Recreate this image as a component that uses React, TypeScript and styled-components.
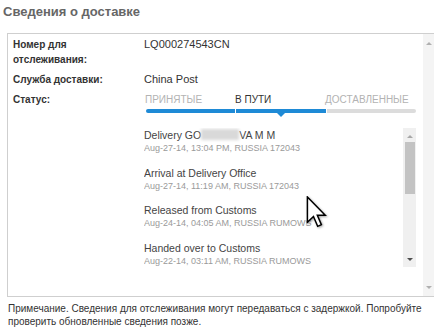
import React from "react";
import styled, { createGlobalStyle } from "styled-components";

const GlobalStyle = createGlobalStyle`
  html, body { margin: 0; padding: 0; background: #fff; }
  body { font-family: "Liberation Sans", Arial, sans-serif; color: #333; overflow: hidden; }
`;

const Page = styled.div`
  position: relative;
  width: 434px;
  height: 333px;
  overflow: hidden;
`;

const Title = styled.h1`
  margin: 0;
  padding: 4px 0 0 3px;
  height: 33px;
  box-sizing: border-box;
  font-size: 13px;
  line-height: 16px;
  font-weight: bold;
  color: #666;
`;

const Box = styled.div`
  margin-left: 7px;
  height: 264px;
  box-sizing: border-box;
  border: 1px solid #cfcfcf;
  border-right: none;
  display: flex;
`;

const Content = styled.div`
  flex: 1;
  padding: 3px 7px 0 5px;
  display: grid;
  grid-template-columns: 131px 1fr;
  grid-auto-rows: min-content;
  row-gap: 5px;
`;

const Label = styled.div`
  font-size: 10px;
  font-weight: bold;
  line-height: 15px;
  color: #333;
  width: 90px;
`;

const Value = styled.div`
  font-size: 11px;
  line-height: 15px;
  color: #333;
`;

const StatusCell = styled.div`
  display: flex;
  flex-direction: column;
`;

const Steps = styled.div`
  display: grid;
  grid-template-columns: repeat(3, 90px);
  padding-left: 1px;
`;

const StepLabel = styled.div<{ $active?: boolean }>`
  font-size: 10px;
  line-height: 15px;
  color: ${(p) => (p.$active ? "#333" : "#b3b3b3")};
`;

const Bar = styled.div`
  display: grid;
  grid-template-columns: repeat(3, 1fr);
  column-gap: 1px;
  width: 270px;
  margin: 2px 0 0 2px;
  height: 4px;
`;

const Segment = styled.div<{ $done?: boolean; $pos: "first" | "mid" | "last"; $current?: boolean }>`
  position: relative;
  height: 4px;
  background: ${(p) => (p.$done ? "#1e8ad6" : "#dcdcdc")};
  border-radius: ${(p) =>
    p.$pos === "first" ? "2px 0 0 2px" : p.$pos === "last" ? "0 2px 2px 0" : "0"};
  &::after {
    content: "";
    display: ${(p) => (p.$current ? "block" : "none")};
    position: absolute;
    left: 50%;
    top: 4px;
    margin-left: -4px;
    border-left: 4px solid transparent;
    border-right: 4px solid transparent;
    border-top: 4px solid #1e8ad6;
  }
`;

const ListArea = styled.div`
  display: flex;
  margin-top: 15px;
  height: 139px;
`;

const Events = styled.div`
  flex: 1;
  overflow: hidden;
`;

const Event = styled.div`
  margin-bottom: 11.5px;
`;

const EventTitle = styled.div`
  font-size: 10.5px;
  line-height: 14px;
  color: #444;
  white-space: nowrap;
`;

const EventDate = styled.div`
  font-size: 9px;
  line-height: 12px;
  color: #9a9a9a;
  white-space: nowrap;
`;

const Blur = styled.span`
  display: inline-block;
  width: 38px;
  height: 11px;
  vertical-align: -1px;
  background: #d9d9d9;
  filter: blur(1.5px);
`;

const Track = styled.div<{ $w: number; $bg: string }>`
  width: ${(p) => p.$w}px;
  background: ${(p) => p.$bg};
  display: flex;
  flex-direction: column;
  align-items: center;
  flex-shrink: 0;
`;

const Arrow = styled.div<{ $dir: "up" | "down"; $color: string; $top: number }>`
  margin-top: ${(p) => p.$top}px;
  width: 0;
  height: 0;
  border-left: 3px solid transparent;
  border-right: 3px solid transparent;
  ${(p) =>
    p.$dir === "up"
      ? `border-bottom: 3px solid ${p.$color};`
      : `border-top: 3px solid ${p.$color};`}
`;

const Thumb = styled.div`
  margin-top: 4px;
  width: 10px;
  height: 52px;
  background: #c3c3c3;
`;

const Spacer = styled.div`
  flex: 1;
`;

const Note = styled.p`
  margin: 0;
  padding: 5px 0 0 8px;
  width: 420px;
  font-size: 10px;
  line-height: 13px;
  color: #333;
`;

const Cursor = styled.svg`
  position: absolute;
  left: 306px;
  top: 196px;
  filter: drop-shadow(1px 1px 1px rgba(0, 0, 0, 0.35));
`;

const events = [
  { title: null, date: "Aug-27-14, 13:04 PM, RUSSIA 172043" },
  { title: "Arrival at Delivery Office", date: "Aug-27-14, 11:19 AM, RUSSIA 172043" },
  { title: "Released from Customs", date: "Aug-24-14, 04:05 AM, RUSSIA RUMOWS" },
  { title: "Handed over to Customs", date: "Aug-22-14, 03:11 AM, RUSSIA RUMOWS" },
];

export default function App() {
  return (
    <Page>
      <GlobalStyle />
      <Title>Сведения о доставке</Title>
      <Box>
        <Content>
          <Label>Номер для отслеживания:</Label>
          <Value>LQ000274543CN</Value>
          <Label>Служба доставки:</Label>
          <Value>China Post</Value>
          <Label>Статус:</Label>
          <StatusCell>
            <Steps>
              <StepLabel>ПРИНЯТЫЕ</StepLabel>
              <StepLabel $active>В ПУТИ</StepLabel>
              <StepLabel>ДОСТАВЛЕННЫЕ</StepLabel>
            </Steps>
            <Bar>
              <Segment $done $pos="first" />
              <Segment $done $pos="mid" $current />
              <Segment $pos="last" />
            </Bar>
            <ListArea>
              <Events>
                {events.map((e, i) => (
                  <Event key={i}>
                    <EventTitle>
                      {e.title ?? (
                        <>
                          Delivery GO<Blur />VA M M
                        </>
                      )}
                    </EventTitle>
                    <EventDate>{e.date}</EventDate>
                  </Event>
                ))}
              </Events>
              <Track $w={13} $bg="#f0f0f0">
                <Arrow $dir="up" $color="#a8a8a8" $top={7} />
                <Thumb />
                <Spacer />
                <Arrow $dir="down" $color="#505050" $top={0} />
                <div style={{ height: 6 }} />
              </Track>
            </ListArea>
          </StatusCell>
        </Content>
        <Track $w={12} $bg="#f4f4f4">
          <Arrow $dir="up" $color="#b0b0b0" $top={8} />
          <Spacer />
          <Arrow $dir="down" $color="#b0b0b0" $top={0} />
          <div style={{ height: 7 }} />
        </Track>
      </Box>
      <Note>
        Примечание. Сведения для отслеживания могут передаваться с задержкой. Попробуйте
        проверить обновленные сведения позже.
      </Note>
      <Cursor width="21" height="32" viewBox="0 0 12 19">
        <path
          d="M0.6 0.6 L0.6 15.6 L4.2 12.2 L6.7 18 L8.9 17 L6.5 11.4 L11.2 11.4 Z"
          fill="#fff"
          stroke="#000"
          strokeWidth="0.9"
          strokeLinejoin="miter"
        />
      </Cursor>
    </Page>
  );
}
